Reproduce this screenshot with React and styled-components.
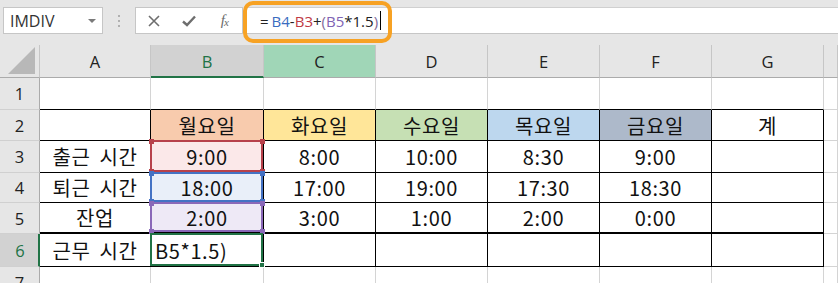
import React from 'react';
import styled, { createGlobalStyle } from 'styled-components';

const GlobalStyle = createGlobalStyle`
  html, body { margin: 0; padding: 0; background: #fff; }
  body { overflow: hidden; }
  *, *::before, *::after { box-sizing: border-box; }
`;

const Frame = styled.div`
  width: 838px;
  height: 283px;
  overflow: hidden;
  background: #fff;
  display: flex;
  flex-direction: column;
`;

const Bar = styled.div`
  flex: none;
  height: 45px;
  background: #e6e6e6;
  display: flex;
  align-items: flex-start;
  padding: 7px 0 0 3px;
`;

const NameBox = styled.div`
  width: 100px;
  height: 27px;
  background: #fff;
  border: 1px solid #c6c6c6;
  display: flex;
  align-items: center;
  justify-content: space-between;
  padding: 0 6px 0 6px;
  font: 16px "Open Sans", sans-serif;
  color: #333;
`;

const Caret = styled.span`
  width: 0;
  height: 0;
  border-left: 4px solid transparent;
  border-right: 4px solid transparent;
  border-top: 4px solid #7a7a7a;
`;

const Grip = styled.div`
  width: 32px;
  height: 27px;
  display: flex;
  flex-direction: column;
  align-items: center;
  justify-content: center;
  gap: 3px;
`;

const GripDot = styled.span`
  width: 2px;
  height: 2px;
  background: #b0b0b0;
`;

const FnBox = styled.div`
  width: 108px;
  height: 27px;
  background: #fff;
  border: 1px solid #c6c6c6;
  display: flex;
  align-items: center;
`;

const IconSlot = styled.span`
  width: 36px;
  display: flex;
  align-items: center;
  justify-content: center;
  color: #6b6b6b;
`;

const FxLabel = styled.span`
  font: italic 15px "Liberation Serif", serif;
  color: #6b6b6b;
  letter-spacing: -1px;
  sub {
    font-size: 11px;
    vertical-align: -1px;
  }
`;

const FormulaField = styled.div`
  position: relative;
  flex: 1;
  height: 27px;
  margin-left: 4px;
  background: #fff;
  border-top: 1px solid #d0d0d0;
  border-bottom: 1px solid #c6c6c6;
  display: flex;
  align-items: center;
  padding-left: 13px;
  font: 15px "Open Sans", sans-serif;
  color: #222;
  white-space: pre;
`;

const Tok = styled.span`
  color: ${(p) => p.$c || '#222'};
  margin-right: ${(p) => p.$gap || 0}px;
`;

const Cursor = styled.span`
  display: inline-block;
  width: 1px;
  height: 19px;
  background: #000;
  margin-left: 2px;
`;

const Highlight = styled.div`
  position: absolute;
  left: -4px;
  top: -7px;
  width: 149px;
  height: 42px;
  border: 4px solid #f7a224;
  border-radius: 10px;
  pointer-events: none;
  z-index: 5;
`;

const Grid = styled.div`
  display: grid;
  grid-template-columns: 40px 111px 113px 112px 112px 112px 112px 112px 1fr;
  grid-template-rows: 33px 32px 31px 32px 30px 31px 33px 32px;
  font-family: "Noto Sans CJK KR", "Noto Sans", sans-serif;
`;

const Corner = styled.div`
  background: #e6e6e6;
  border-right: 1px solid #c6c6c6;
  border-bottom: 1px solid #ababab;
  display: flex;
  align-items: flex-end;
  justify-content: flex-end;
  padding: 0 4px 3px 0;
`;

const CornerTri = styled.span`
  width: 0;
  height: 0;
  border-left: 27px solid transparent;
  border-bottom: 27px solid #b8b8b8;
`;

const ColHead = styled.div`
  background: ${(p) => (p.$accent ? '#a0d6b7' : p.$active ? '#d2d2d2' : '#e6e6e6')};
  color: ${(p) => (p.$active ? '#217346' : '#222')};
  border-right: 1px solid #c6c6c6;
  border-bottom: ${(p) => (p.$active ? '2px solid #217346' : '1px solid #ababab')};
  display: flex;
  align-items: center;
  justify-content: center;
  font: 16.5px "Open Sans", sans-serif;
  padding-top: ${(p) => (p.$active ? '1px' : '0')};
`;

const RowHead = styled.div`
  background: ${(p) => (p.$active ? '#d2d2d2' : '#e6e6e6')};
  color: ${(p) => (p.$active ? '#217346' : '#222')};
  border-right: ${(p) => (p.$active ? '2px solid #217346' : '1px solid #ababab')};
  border-bottom: 1px solid #d0d0d0;
  display: flex;
  align-items: center;
  justify-content: center;
  font: 16.5px "Open Sans", sans-serif;
  padding-left: ${(p) => (p.$active ? '2px' : '0')};
`;

const Cell = styled.div`
  position: ${(p) => (p.$ref ? 'relative' : 'static')};
  background: ${(p) => p.$fill || '#fff'};
  border-right: 1px solid ${(p) => p.$rc};
  border-bottom: ${(p) => p.$bw}px solid ${(p) => p.$bc};
  display: flex;
  align-items: center;
  justify-content: ${(p) => (p.$left ? 'flex-start' : 'center')};
  padding-left: ${(p) => (p.$left ? '4px' : '0')};
  font-size: 20px;
  letter-spacing: 0.6px;
  word-spacing: 4px;
  color: #111;
  white-space: pre;
`;

const RefFrame = styled.div`
  position: absolute;
  top: -1px;
  left: -1px;
  right: 0;
  bottom: 0;
  border: 2px solid ${(p) => p.$c};
  z-index: ${(p) => p.$z};
  pointer-events: none;
`;

const Handle = styled.span`
  position: absolute;
  width: 5px;
  height: 5px;
  background: ${(p) => p.$c};
  ${(p) => (p.$top ? 'top: -3.5px;' : 'bottom: -3.5px;')}
  ${(p) => (p.$l ? 'left: -3.5px;' : 'right: -3.5px;')}
`;

const FillHandle = styled.span`
  position: absolute;
  right: -4px;
  bottom: -4px;
  width: 6px;
  height: 6px;
  background: #217346;
  border: 1px solid #fff;
`;

const GRID = '#d4d4d4';
const INK = '#000';

const headFills = ['#f8cbad', '#ffe699', '#c6e0b4', '#bdd7ee', '#adb9ca'];

const data = {
  2: ['', '월요일', '화요일', '수요일', '목요일', '금요일', '계'],
  3: ['출근 시간', '9:00', '8:00', '10:00', '8:30', '9:00', ''],
  4: ['퇴근 시간', '18:00', '17:00', '19:00', '17:30', '18:30', ''],
  5: ['잔업', '2:00', '3:00', '1:00', '2:00', '0:00', ''],
  6: ['근무 시간', 'B5*1.5)', '', '', '', '', ''],
};

const refs = {
  3: { c: '#b7414b', fill: '#fbe8e9', z: 1 },
  4: { c: '#4472c4', fill: '#e9eff9', z: 2 },
  5: { c: '#8a68b8', fill: '#eee9f6', z: 3 },
};

const letters = ['A', 'B', 'C', 'D', 'E', 'F', 'G', ''];

function RefBox({ color, z }) {
  return (
    <RefFrame $c={color} $z={z}>
      <Handle $c={color} $top $l />
      <Handle $c={color} $top />
      <Handle $c={color} $l />
      <Handle $c={color} />
    </RefFrame>
  );
}

export default function App() {
  const rows = [1, 2, 3, 4, 5, 6, 7];
  return (
    <Frame>
      <GlobalStyle />
      <Bar>
        <NameBox>
          IMDIV
          <Caret />
        </NameBox>
        <Grip>
          <GripDot />
          <GripDot />
          <GripDot />
        </Grip>
        <FnBox>
          <IconSlot>
            <svg width="12" height="12" viewBox="0 0 12 12">
              <path d="M1 1 L11 11 M11 1 L1 11" stroke="#6e6e6e" strokeWidth="1.6" fill="none" />
            </svg>
          </IconSlot>
          <IconSlot>
            <svg width="14" height="12" viewBox="0 0 14 12">
              <path d="M1 6.5 L5 10 L13 1.5" stroke="#6e6e6e" strokeWidth="2.4" fill="none" />
            </svg>
          </IconSlot>
          <IconSlot>
            <FxLabel>
              f<sub>x</sub>
            </FxLabel>
          </IconSlot>
        </FnBox>
        <FormulaField>
          <Highlight />
          <Tok $gap={3}>=</Tok>
          <Tok $c="#3a6cc0">B4</Tok>
          <Tok>-</Tok>
          <Tok $c="#c03a45">B3</Tok>
          <Tok>+</Tok>
          <Tok $c="#7f6a9a">(</Tok>
          <Tok $c="#8063b4">B5</Tok>
          <Tok>*1.5</Tok>
          <Tok $c="#7f6a9a">)</Tok>
          <Cursor />
        </FormulaField>
      </Bar>
      <Grid>
        <Corner>
          <CornerTri />
        </Corner>
        {letters.map((l, i) => (
          <ColHead key={'h' + i} $active={l === 'B'} $accent={l === 'C'}>
            {l}
          </ColHead>
        ))}
        {rows.map((r) => (
          <React.Fragment key={r}>
            <RowHead $active={r === 6}>{r}</RowHead>
            {letters.map((l, c) => {
              const inTable = r >= 2 && r <= 6 && c <= 6;
              const rc = inTable ? INK : GRID;
              const topOfTable = r === 1 && c <= 6;
              const bc = inTable || topOfTable ? INK : GRID;
              const bw = r === 5 && c <= 6 ? 2 : 1;
              const text = data[r] ? data[r][c] || '' : '';
              let fill;
              if (r === 2 && c >= 1 && c <= 5) fill = headFills[c - 1];
              const ref = c === 1 && refs[r];
              if (ref) fill = ref.fill;
              const active = c === 1 && r === 6;
              return (
                <Cell
                  key={r + '-' + c}
                  $rc={rc}
                  $bc={bc}
                  $bw={bw}
                  $fill={fill}
                  $left={active}
                  $ref={ref || active}
                >
                  {text}
                  {ref && <RefBox color={ref.c} z={ref.z} />}
                  {active && (
                    <RefFrame $c="#217346" $z={4}>
                      <FillHandle />
                    </RefFrame>
                  )}
                </Cell>
              );
            })}
          </React.Fragment>
        ))}
      </Grid>
    </Frame>
  );
}
